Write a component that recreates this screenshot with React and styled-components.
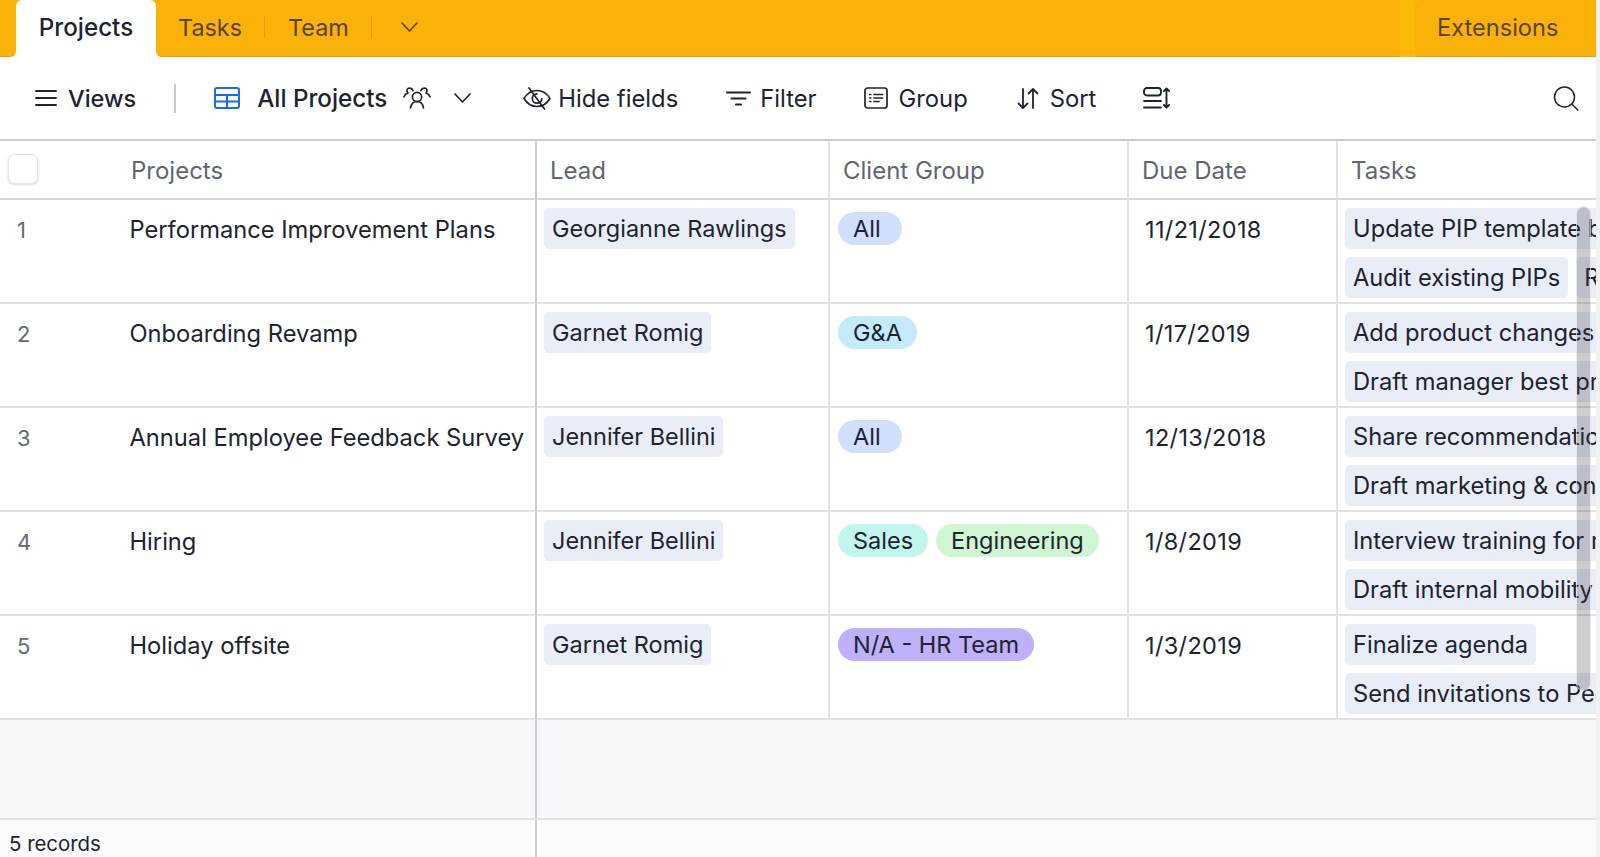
import React from 'react'
import styled, { createGlobalStyle } from 'styled-components'

const GlobalStyle = createGlobalStyle`
  html, body {
    margin: 0;
    padding: 0;
    background: #f1f1f1;
    font-family: Inter, "Noto Sans", sans-serif;
    color: #1d2330;
  }
`

const Page = styled.div`
  width: 1596px;
  height: 857px;
  display: flex;
  flex-direction: column;
  overflow: hidden;
  background: #fff;
`

const TabBar = styled.div`
  height: 57px;
  flex: none;
  display: flex;
  background: linear-gradient(#fab208 50%, #fff 50%);
`

const TabEdge = styled.div`
  width: 16px;
  background: #fab208;
  border-bottom: 1px solid #e4a40c;
  border-bottom-right-radius: 6px;
`

const ActiveTab = styled.div`
  width: 140px;
  background: #fff;
  border-radius: 6px 6px 0 0;
  display: flex;
  align-items: center;
  justify-content: center;
  padding: 0 0 2px 0;
  box-sizing: border-box;
  font-size: 24.2px;
  font-weight: 500;
`

const TabRest = styled.div`
  flex: 1;
  display: flex;
  align-items: center;
  padding-bottom: 2px;
  background: #fab208;
  border-bottom: 1px solid #e4a40c;
  border-bottom-left-radius: 6px;
  border-top-right-radius: 6px;
  color: #5b4413;
  font-size: 23.4px;
`

const TabLabel = styled.span`
  margin-left: ${(p) => p.$left}px;
`

const TabDivider = styled.span`
  width: 1px;
  height: 22px;
  margin-left: 22px;
  background: #dd9f10;
`

const ExtensionsWrap = styled.div`
  width: 196px;
  padding-left: 15px;
  box-sizing: border-box;
  background: #fdb907;
  border-top-right-radius: 10px;
`

const Extensions = styled.div`
  height: 100%;
  box-sizing: border-box;
  display: flex;
  align-items: center;
  padding: 0 0 2px 22px;
  background: #fab208;
  border-bottom: 1px solid #e4a40c;
  border-radius: 6px 10px 0 0;
  color: #5b4413;
  font-size: 23.6px;
`

const Toolbar = styled.div`
  height: 84px;
  flex: none;
  display: flex;
  align-items: center;
  padding-left: 35px;
  box-sizing: border-box;
  border-bottom: 2px solid #c9cdd2;
  font-size: 23.8px;
`

const ToolItem = styled.div`
  display: flex;
  align-items: center;
  gap: ${(p) => p.$gap || 11}px;
  margin-left: ${(p) => p.$left || 0}px;
  font-weight: ${(p) => (p.$strong ? 500 : 400)};
  font-size: ${(p) => p.$size || 'inherit'};
`

const ToolDivider = styled.span`
  width: 2px;
  height: 29px;
  margin-left: 38px;
  background: #c6cacf;
`

const SearchButton = styled.div`
  margin-left: auto;
  margin-right: 17px;
  display: flex;
`

const Grid = styled.div`
  position: relative;
  display: grid;
  grid-template-columns: 537px 293px 299px 209px 1fr;
  grid-template-rows: 59px repeat(5, 104px);
  flex: none;
  overflow: hidden;
`

const HeaderCell = styled.div`
  box-sizing: border-box;
  display: flex;
  align-items: center;
  padding: 1px 0 0 13px;
  border-right: ${(p) => (p.$last ? 'none' : `2px solid ${p.$primary ? '#c9cdd2' : '#e0e3e6'}`)};
  border-bottom: 2px solid #d5d8dc;
  color: #5e6674;
  font-size: 24px;
`

const HeaderRow = styled.div`
  display: contents;
`

const CheckBox = styled.span`
  width: 30px;
  height: 30px;
  box-sizing: border-box;
  margin: -2px 93px 0 -5px;
  border-radius: 7px;
  background: #fff;
  border: 1px solid #e4e6ea;
  box-shadow: 0 1px 3px rgba(0, 0, 0, 0.16);
`

const Cell = styled.div`
  box-sizing: border-box;
  min-width: 0;
  overflow: hidden;
  padding: 8px 0 0 7px;
  border-right: ${(p) => (p.$last ? 'none' : `2px solid ${p.$primary ? '#c9cdd2' : '#e0e3e6'}`)};
  border-bottom: 2px solid #e0e3e6;
  font-size: 23.5px;
`

const NameCell = styled(Cell)`
  display: flex;
  padding: 16px 0 0;
  line-height: 28px;
  font-size: 23.7px;
`

const RowNumber = styled.span`
  width: 129.5px;
  flex: none;
  padding-left: 17px;
  box-sizing: border-box;
  color: #636a78;
  font-size: 22px;
`

const DateText = styled.div`
  padding: 8px 0 0 9px;
  line-height: 28px;
  letter-spacing: 0.35px;
`

const NameChip = styled.span`
  display: inline-flex;
  align-items: center;
  flex: none;
  height: 41px;
  padding: 0 8px;
  border-radius: 5px;
  background: #e9edf8;
  white-space: nowrap;
`

const TaskLine = styled.div`
  display: flex;
  gap: 8px;
  margin-bottom: 8px;
  font-size: 23.7px;
`

const PillRow = styled.div`
  display: flex;
  gap: 8px;
  padding: 4px 0 0 1px;
`

const Pill = styled.span`
  display: inline-flex;
  align-items: center;
  min-width: 64px;
  height: 33px;
  box-sizing: border-box;
  padding: 0 15px;
  border-radius: 17px;
  background: ${(p) => p.$color};
  white-space: nowrap;
`

const EmptyArea = styled.div`
  height: 100px;
  flex: none;
  box-sizing: border-box;
  display: flex;
  background: #f5f7fb;
  border-bottom: 2px solid #e0e3e6;
`

const LeftPane = styled.div`
  width: 537px;
  box-sizing: border-box;
  border-right: 2px solid #c9cdd2;
`

const Footer = styled.div`
  flex: 1;
  display: flex;
  background: #fafbfd;
  font-size: 20.4px;
`

const FooterLeft = styled(LeftPane)`
  padding: 11px 0 0 9px;
`

const ScrollThumb = styled.div`
  position: absolute;
  top: 65px;
  right: 5px;
  width: 15px;
  height: 485px;
  box-sizing: border-box;
  border-radius: 8px;
  background: rgba(60, 60, 70, 0.26);
  border: 1px solid rgba(255, 255, 255, 0.6);
`

const Icon = styled.svg`
  display: block;
  flex: none;
  fill: none;
  stroke: ${(p) => p.$color || '#1d2330'};
  stroke-width: ${(p) => p.$weight || 1.7};
  stroke-linecap: round;
  stroke-linejoin: round;
`

const MenuIcon = () => (
  <Icon width="22" height="18" viewBox="0 0 22 18" $weight="2">
    <path d="M1 2h20M1 9h20M1 16h20" />
  </Icon>
)

const TableIcon = () => (
  <Icon width="26" height="22" viewBox="0 0 26 22" $color="#166ee1" $weight="2">
    <rect x="1" y="1" width="24" height="20" rx="2" />
    <path d="M1 8h24M1 14.5h24M13 8v13" />
  </Icon>
)

const PeopleIcon = () => (
  <Icon width="28" height="22" viewBox="0 0 28 22" $weight="1.7">
    <circle cx="14" cy="10" r="4.600" />
    <path d="M7.500 21c.6-4 3-6.500 6.500-6.500s5.900 2.500 6.500 6.500" />
    <path d="M10 3.600A3.400 3.400 0 0 0 5.400 1.300C3.700 2.200 3.500 4.600 5 6c-1.900.6-3.300 1.800-4 3.800" />
    <path d="M18 3.600a3.400 3.400 0 0 1 4.600-2.300c1.700.9 1.900 3.300.4 4.700 1.900.6 3.300 1.800 4 3.800" />
  </Icon>
)

const Chevron = () => (
  <Icon width="17" height="10" viewBox="0 0 17 10" $color="currentColor" $weight="1.7">
    <path d="M1 1l7.500 8L16 1" />
  </Icon>
)

const EyeOffIcon = () => (
  <Icon width="28" height="23" viewBox="0 0 28 23" $weight="1.7">
    <path d="M1 11.500C4 6.500 8.500 3.500 14 3.500s10 3 13 8c-3 5-7.500 8-13 8s-10-3-13-8z" />
    <path d="M14 6.800a4.700 4.700 0 1 0 4.700 4.700" />
    <path d="M6 1l15.500 21" />
  </Icon>
)

const FilterIcon = () => (
  <Icon width="25" height="15" viewBox="0 0 25 15" $weight="2">
    <path d="M1 1.500h23M5.500 7.500h14M10 13.500h5" />
  </Icon>
)

const GroupIcon = () => (
  <Icon width="24" height="22" viewBox="0 0 24 22">
    <rect x="1" y="1" width="22" height="20" rx="2.500" />
    <path d="M5.800 7.500h1M5.800 11h1M5.800 14.500h1M10 7.500h8.500M10 11h8.500M10 14.500h5" />
  </Icon>
)

const SortIcon = () => (
  <Icon width="22" height="23" viewBox="0 0 22 23" $weight="1.8">
    <path d="M6 2v19M1.500 16.500L6 21l4.500-4.500" />
    <path d="M16 21V2M11.500 6.500L16 2l4.500 4.500" />
  </Icon>
)

const RowHeightIcon = () => (
  <Icon width="27" height="22" viewBox="0 0 27 22" $weight="1.9">
    <rect x="1" y="1" width="17" height="7.500" rx="3" />
    <path d="M1 14h17M1 20.500h17" />
    <path d="M23.500 1.500v19M21 4l2.500-2.500L26 4M21 18l2.500 2.500L26 18" />
  </Icon>
)

const SearchIcon = () => (
  <Icon width="26" height="25" viewBox="0 0 26 25" $weight="1.5">
    <circle cx="11.500" cy="11" r="10" />
    <path d="M18.800 18l6 6" />
  </Icon>
)

const rows = [
  {
    id: 1,
    name: 'Performance Improvement Plans',
    lead: 'Georgianne Rawlings',
    groups: [{ label: 'All', color: '#cfdffd' }],
    due: '11/21/2018',
    tasks: [['Update PIP template before launch'], ['Audit existing PIPs', 'Review with legal']],
  },
  {
    id: 2,
    name: 'Onboarding Revamp',
    lead: 'Garnet Romig',
    groups: [{ label: 'G&A', color: '#c3ebfb' }],
    due: '1/17/2019',
    tasks: [['Add product changes to guide'], ['Draft manager best practices']],
  },
  {
    id: 3,
    name: 'Annual Employee Feedback Survey',
    lead: 'Jennifer Bellini',
    groups: [{ label: 'All', color: '#cfdffd' }],
    due: '12/13/2018',
    tasks: [['Share recommendations'], ['Draft marketing & content plan']],
  },
  {
    id: 4,
    name: 'Hiring',
    lead: 'Jennifer Bellini',
    groups: [
      { label: 'Sales', color: '#c2f5ee' },
      { label: 'Engineering', color: '#cff5d1' },
    ],
    due: '1/8/2019',
    tasks: [['Interview training for managers'], ['Draft internal mobility policy']],
  },
  {
    id: 5,
    name: 'Holiday offsite',
    lead: 'Garnet Romig',
    groups: [{ label: 'N/A - HR Team', color: '#c0b0fa' }],
    due: '1/3/2019',
    tasks: [['Finalize agenda'], ['Send invitations to People team']],
  },
]

function App() {
  return (
    <>
      <GlobalStyle />
      <Page>
        <TabBar>
          <TabEdge />
          <ActiveTab>Projects</ActiveTab>
          <TabRest>
            <TabLabel $left={22}>Tasks</TabLabel>
            <TabDivider />
            <TabLabel $left={23}>Team</TabLabel>
            <TabDivider />
            <TabLabel $left={29}>
              <Chevron />
            </TabLabel>
          </TabRest>
          <ExtensionsWrap>
            <Extensions>Extensions</Extensions>
          </ExtensionsWrap>
        </TabBar>

        <Toolbar>
          <ToolItem $gap={11} $strong $size="23.5px">
            <MenuIcon />
            Views
          </ToolItem>
          <ToolDivider />
          <ToolItem $left={38} $gap={17} $strong $size="24.2px">
            <TableIcon />
            All Projects
          </ToolItem>
          <ToolItem $left={16}>
            <PeopleIcon />
          </ToolItem>
          <ToolItem $left={23}>
            <Chevron />
          </ToolItem>
          <ToolItem $left={52} $gap={7}>
            <EyeOffIcon />
            Hide fields
          </ToolItem>
          <ToolItem $left={48} $gap={9}>
            <FilterIcon />
            Filter
          </ToolItem>
          <ToolItem $left={47} $gap={11}>
            <GroupIcon />
            Group
          </ToolItem>
          <ToolItem $left={49} $gap={11}>
            <SortIcon />
            Sort
          </ToolItem>
          <ToolItem $left={47}>
            <RowHeightIcon />
          </ToolItem>
          <SearchButton>
            <SearchIcon />
          </SearchButton>
        </Toolbar>

        <Grid>
          <HeaderRow>
            <HeaderCell $primary>
              <CheckBox />
              Projects
            </HeaderCell>
            <HeaderCell>Lead</HeaderCell>
            <HeaderCell>Client Group</HeaderCell>
            <HeaderCell>Due Date</HeaderCell>
            <HeaderCell $last>Tasks</HeaderCell>
          </HeaderRow>
          {rows.map((row) => (
            <React.Fragment key={row.id}>
              <NameCell $primary>
                <RowNumber>{row.id}</RowNumber>
                {row.name}
              </NameCell>
              <Cell>
                <NameChip>{row.lead}</NameChip>
              </Cell>
              <Cell>
                <PillRow>
                  {row.groups.map((group) => (
                    <Pill key={group.label} $color={group.color}>
                      {group.label}
                    </Pill>
                  ))}
                </PillRow>
              </Cell>
              <Cell>
                <DateText>{row.due}</DateText>
              </Cell>
              <Cell $last>
                {row.tasks.map((line) => (
                  <TaskLine key={line[0]}>
                    {line.map((task) => (
                      <NameChip key={task}>{task}</NameChip>
                    ))}
                  </TaskLine>
                ))}
              </Cell>
            </React.Fragment>
          ))}
          <ScrollThumb />
        </Grid>

        <EmptyArea>
          <LeftPane />
        </EmptyArea>
        <Footer>
          <FooterLeft>5 records</FooterLeft>
        </Footer>
      </Page>
    </>
  )
}

export default App
